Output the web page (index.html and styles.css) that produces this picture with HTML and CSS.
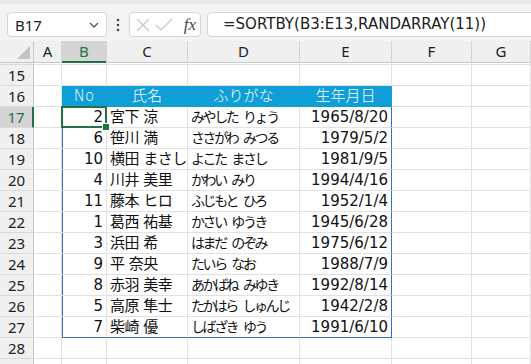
FILE: index.html
```html
<!DOCTYPE html>
<html lang="ja">
  <head>
    <meta charset="UTF-8" />
    <meta name="viewport" content="width=device-width, initial-scale=1.0" />
    <title>SORTBY</title>
    <link rel="stylesheet" href="styles.css">
  </head>
  <body>
    <div class="formula-bar">
      <div class="name-box">
        <span>B17</span>
        <svg width="12" height="8" viewBox="0 0 12 8">
          <polyline points="2,2 6,6 10,2" fill="none" stroke="#555" stroke-width="1.3" />
        </svg>
      </div>
      <div class="dots">
        <svg width="4" height="14" viewBox="0 0 4 14">
          <circle cx="2" cy="2" r="1.3" fill="#444" />
          <circle cx="2" cy="7" r="1.3" fill="#444" />
          <circle cx="2" cy="12" r="1.3" fill="#444" />
        </svg>
      </div>
      <div class="fx-box">
        <svg width="16" height="16" viewBox="0 0 16 16">
          <path d="M2 2 L14 14 M14 2 L2 14" stroke="#c8c8c8" stroke-width="1.2" />
        </svg>
        <svg width="18" height="16" viewBox="0 0 18 16">
          <polyline points="1,8 6,13 17,2" fill="none" stroke="#c8c8c8" stroke-width="1.2" />
        </svg>
        <span class="fx">fx</span>
      </div>
      <div class="formula-input">=SORTBY(B3:E13,RANDARRAY(11))</div>
    </div>

    <div class="sheet">
      <div class="row col-head">
        <div class="corner"></div>
        <div class="ch">A</div>
        <div class="ch active">B</div>
        <div class="ch">C</div>
        <div class="ch">D</div>
        <div class="ch">E</div>
        <div class="ch">F</div>
        <div class="ch">G</div>
      </div>
      <div class="row sliver">
        <div class="rh"></div>
        <div class="c"></div><div class="c"></div><div class="c"></div><div class="c"></div><div class="c"></div><div class="c"></div><div class="c"></div>
      </div>
      <div class="row">
        <div class="rh">15</div>
        <div class="c"></div><div class="c"></div><div class="c"></div><div class="c"></div><div class="c"></div><div class="c"></div><div class="c"></div>
      </div>
      <div class="row tbl-head">
        <div class="rh">16</div>
        <div class="c"></div>
        <div class="c th">No</div>
        <div class="c th">氏名</div>
        <div class="c th">ふりがな</div>
        <div class="c th">生年月日</div>
        <div class="c"></div><div class="c"></div>
      </div>
      <div class="row tbl">
        <div class="rh current">17</div>
        <div class="c"></div>
        <div class="c num b selected">2</div>
        <div class="c name">宮下 涼</div>
        <div class="c kana">みやした りょう</div>
        <div class="c num e">1965/8/20</div>
        <div class="c"></div><div class="c"></div>
      </div>
      <div class="row tbl">
        <div class="rh">18</div>
        <div class="c"></div>
        <div class="c num b">6</div>
        <div class="c name">笹川 満</div>
        <div class="c kana">ささがわ みつる</div>
        <div class="c num e">1979/5/2</div>
        <div class="c"></div><div class="c"></div>
      </div>
      <div class="row tbl">
        <div class="rh">19</div>
        <div class="c"></div>
        <div class="c num b">10</div>
        <div class="c name">横田 まさし</div>
        <div class="c kana">よこた まさし</div>
        <div class="c num e">1981/9/5</div>
        <div class="c"></div><div class="c"></div>
      </div>
      <div class="row tbl">
        <div class="rh">20</div>
        <div class="c"></div>
        <div class="c num b">4</div>
        <div class="c name">川井 美里</div>
        <div class="c kana">かわい みり</div>
        <div class="c num e">1994/4/16</div>
        <div class="c"></div><div class="c"></div>
      </div>
      <div class="row tbl">
        <div class="rh">21</div>
        <div class="c"></div>
        <div class="c num b">11</div>
        <div class="c name">藤本 ヒロ</div>
        <div class="c kana">ふじもと ひろ</div>
        <div class="c num e">1952/1/4</div>
        <div class="c"></div><div class="c"></div>
      </div>
      <div class="row tbl">
        <div class="rh">22</div>
        <div class="c"></div>
        <div class="c num b">1</div>
        <div class="c name">葛西 祐基</div>
        <div class="c kana">かさい ゆうき</div>
        <div class="c num e">1945/6/28</div>
        <div class="c"></div><div class="c"></div>
      </div>
      <div class="row tbl">
        <div class="rh">23</div>
        <div class="c"></div>
        <div class="c num b">3</div>
        <div class="c name">浜田 希</div>
        <div class="c kana">はまだ のぞみ</div>
        <div class="c num e">1975/6/12</div>
        <div class="c"></div><div class="c"></div>
      </div>
      <div class="row tbl">
        <div class="rh">24</div>
        <div class="c"></div>
        <div class="c num b">9</div>
        <div class="c name">平 奈央</div>
        <div class="c kana">たいら なお</div>
        <div class="c num e">1988/7/9</div>
        <div class="c"></div><div class="c"></div>
      </div>
      <div class="row tbl">
        <div class="rh">25</div>
        <div class="c"></div>
        <div class="c num b">8</div>
        <div class="c name">赤羽 美幸</div>
        <div class="c kana">あかばね みゆき</div>
        <div class="c num e">1992/8/14</div>
        <div class="c"></div><div class="c"></div>
      </div>
      <div class="row tbl">
        <div class="rh">26</div>
        <div class="c"></div>
        <div class="c num b">5</div>
        <div class="c name">高原 隼士</div>
        <div class="c kana">たかはら しゅんじ</div>
        <div class="c num e">1942/2/8</div>
        <div class="c"></div><div class="c"></div>
      </div>
      <div class="row tbl last">
        <div class="rh">27</div>
        <div class="c"></div>
        <div class="c num b">7</div>
        <div class="c name">柴崎 優</div>
        <div class="c kana">しばざき ゆう</div>
        <div class="c num e">1991/6/10</div>
        <div class="c"></div><div class="c"></div>
      </div>
      <div class="row">
        <div class="rh">28</div>
        <div class="c"></div><div class="c"></div><div class="c"></div><div class="c"></div><div class="c"></div><div class="c"></div><div class="c"></div>
      </div>
      <div class="row">
        <div class="rh"></div>
        <div class="c"></div><div class="c"></div><div class="c"></div><div class="c"></div><div class="c"></div><div class="c"></div><div class="c"></div>
      </div>
    </div>
  </body>
</html>
```

FILE: styles.css
```css
/* Reset */
* {
  margin: 0;
  padding: 0;
  box-sizing: border-box;
}

body {
  width: 531px;
  height: 364px;
  overflow: hidden;
  background: #ffffff;
  font-family: "DejaVu Sans", "Noto Sans CJK JP", sans-serif;
  color: #111;
}

/* Formula bar */
.formula-bar {
  display: flex;
  align-items: center;
  height: 41px;
  padding: 4px 0 0 7px;
  background: #f3f3f3;
  border-top: 4px solid #e8e8e8;
}

.name-box {
  display: flex;
  align-items: center;
  justify-content: space-between;
  width: 100px;
  height: 25px;
  padding: 0 6px 0 7px;
  background: #fff;
  border: 1px solid #d6d6d6;
  border-radius: 4px;
  font-family: "Noto Sans", sans-serif;
  font-size: 15px;
  color: #222;
}

.dots {
  display: flex;
  align-items: center;
  justify-content: center;
  width: 22px;
  height: 25px;
}

.fx-box {
  display: flex;
  align-items: center;
  gap: 4px;
  width: 72px;
  height: 25px;
  padding: 0 4px 0 5px;
  background: #fff;
  border: 1px solid #d6d6d6;
  border-radius: 4px;
}

.fx {
  margin-left: auto;
  font-family: "Liberation Serif", serif;
  font-style: italic;
  font-size: 17px;
  color: #444;
}

.formula-input {
  flex: 1;
  height: 25px;
  margin: 0 -10px 0 6px;
  padding: 0 0 0 15px;
  background: #fff;
  border: 1px solid #d6d6d6;
  border-radius: 4px;
  font-family: "DejaVu Sans", sans-serif;
  font-size: 15px;
  line-height: 23px;
  color: #222;
  white-space: nowrap;
}

/* Sheet grid */
.row {
  display: grid;
  grid-template-columns: 34px 28px 45px 81px 112px 92px 80px 59px;
  height: 21px;
}

.c {
  border-right: 1px solid #e1e1e1;
  border-bottom: 1px solid #e1e1e1;
  padding: 0 3px;
  font-size: 15px;
  line-height: 20px;
  white-space: nowrap;
  overflow: visible;
}

.name {
  letter-spacing: -0.5px;
}

.kana {
  font-size: 14px;
  letter-spacing: -2.4px;
  word-spacing: 3.5px;
}

.num {
  text-align: right;
}

.rh {
  background: #f0f0f0;
  border-right: 1px solid #c8c8c8;
  border-bottom: 1px solid #dadada;
  font-family: "Noto Sans", sans-serif;
  font-size: 15px;
  line-height: 20px;
  text-align: center;
  color: #222;
}

.rh.current {
  background: #d4d4d4;
  color: #217346;
  border-right: 2px solid #217346;
}

/* Column header */
.col-head {
  background: #f0f0f0;
}

.corner {
  position: relative;
  border-right: 1px solid #c8c8c8;
  border-bottom: 1px solid #c8c8c8;
}

.corner::after {
  content: "";
  position: absolute;
  right: 3px;
  bottom: 3px;
  border-style: solid;
  border-width: 0 0 13px 13px;
  border-color: transparent transparent #c4c4c4 transparent;
}

.ch {
  border-right: 1px solid #d4d4d4;
  border-bottom: 1px solid #c8c8c8;
  font-family: "Noto Sans", sans-serif;
  font-size: 15px;
  line-height: 20px;
  text-align: center;
  color: #222;
}

.ch.active {
  background: #d4d4d4;
  color: #217346;
  border-bottom: 2px solid #217346;
}

.sliver {
  height: 3px;
}

/* Table */
.tbl-head .th {
  background: #0f9ed5;
  border-right-color: #0f9ed5;
  border-bottom-color: #0f9ed5;
  color: #fff;
  text-align: center;
  font-weight: 300;
}

.tbl .b {
  box-shadow: inset 1px 0 0 #3470c4;
}

.tbl .e {
  border-right-color: #3470c4;
}

.tbl.last .c:nth-child(n+3):nth-child(-n+6) {
  border-bottom-color: #3470c4;
}

.selected {
  position: relative;
}

.selected::before {
  content: "";
  position: absolute;
  left: -1px;
  top: -1px;
  right: -1px;
  bottom: -1px;
  border: 2px solid #217346;
}

.selected::after {
  content: "";
  position: absolute;
  right: -4px;
  bottom: -4px;
  width: 6px;
  height: 6px;
  background: #217346;
  border: 1px solid #fff;
}
```
